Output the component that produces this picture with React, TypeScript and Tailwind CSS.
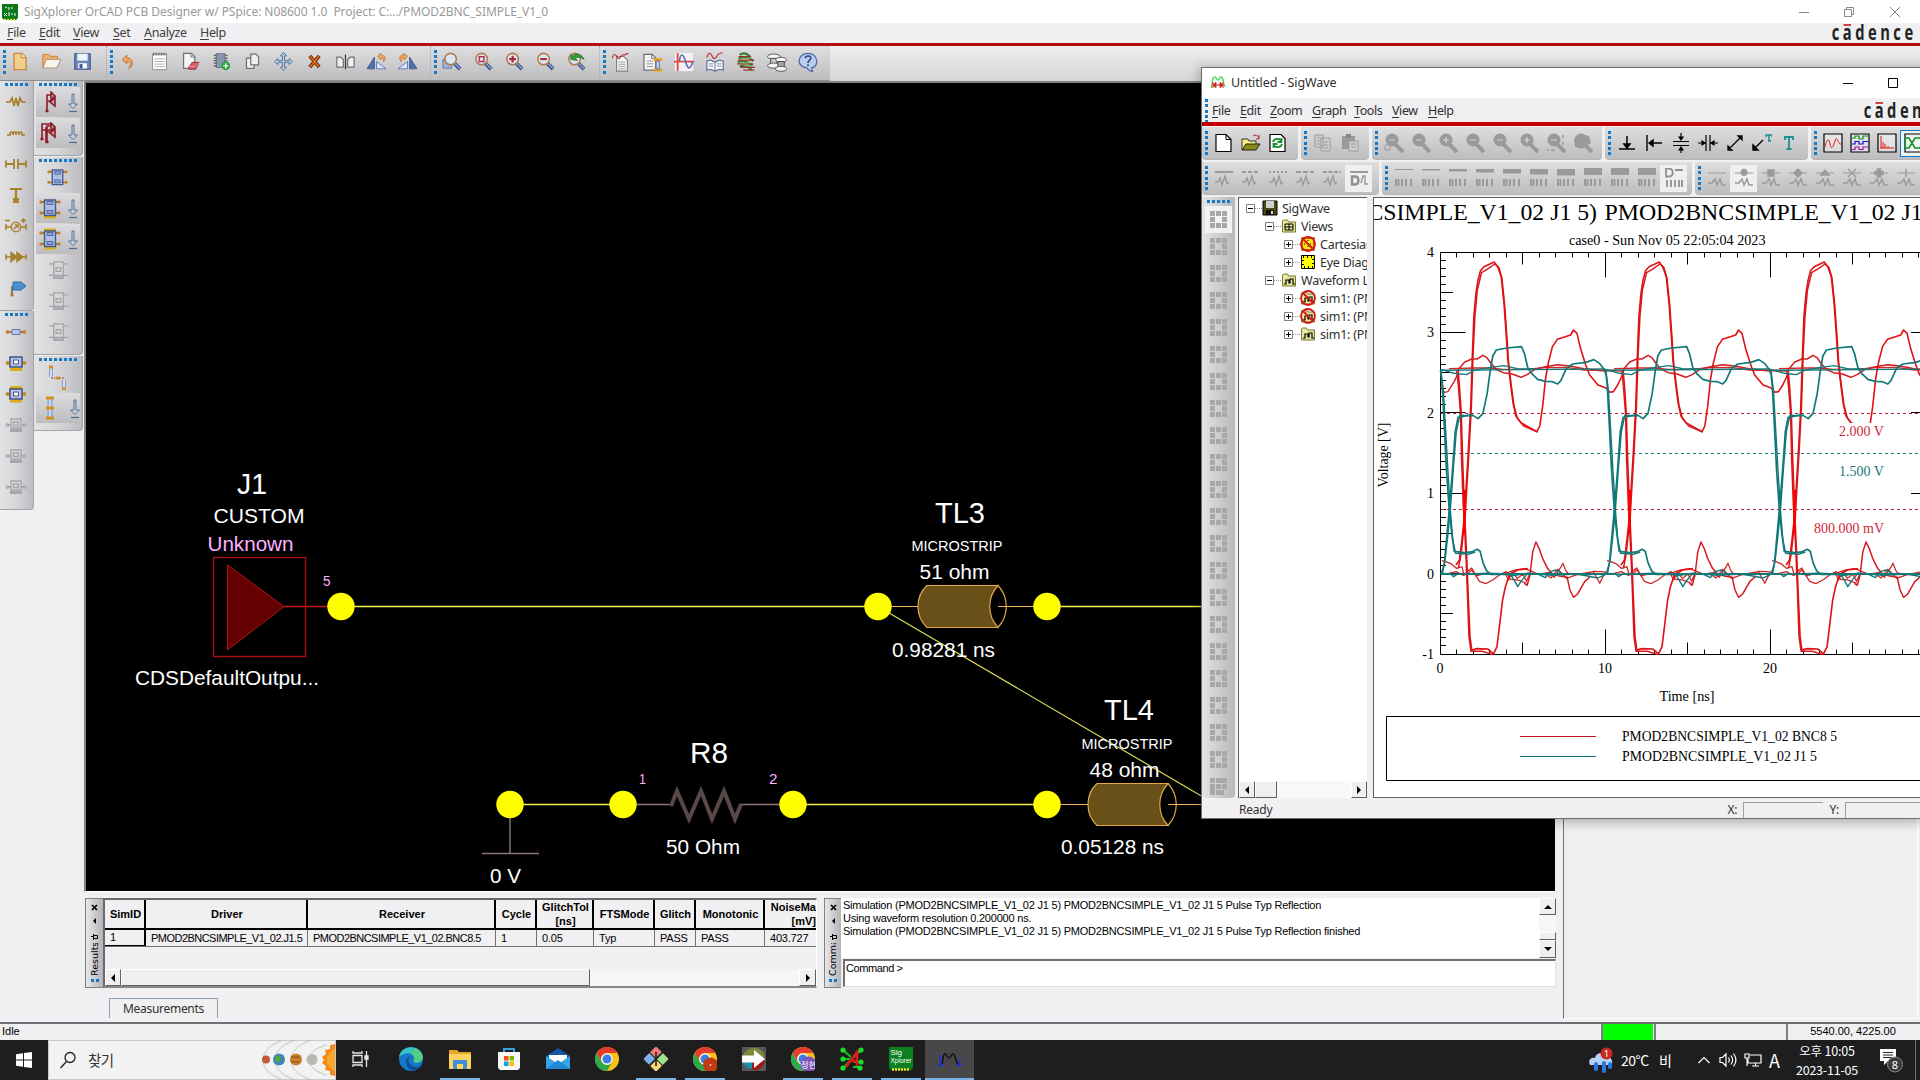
import React from "react";

type Kids = { children?: React.ReactNode };

/* ---------- small building blocks ---------- */

const Ico = ({ children, s = 22, vb = 22 }: Kids & { s?: number; vb?: number }) => (
  <svg width={s} height={s} viewBox={`0 0 ${vb} ${vb}`} fill="none" className="block shrink-0">
    {children}
  </svg>
);

const GripV = () => (
  <div className="flex h-6 w-[3px] shrink-0 flex-col justify-between">
    {[0, 1, 2, 3, 4].map((i) => (
      <div key={i} className="h-[3px] w-[3px] bg-[#1478c8]" />
    ))}
  </div>
);

const GripH = ({ n }: { n: number }) => (
  <div className="flex h-[3px] shrink-0 justify-center gap-[2px]">
    {Array.from({ length: n }, (_, i) => (
      <div key={i} className="h-[3px] w-[3px] bg-[#1478c8]" />
    ))}
  </div>
);

const Cell31 = ({ children }: Kids) => (
  <div className="flex h-8 w-[31px] shrink-0 items-center justify-center">{children}</div>
);

const MenuItem = ({ t, w }: { t: string; w: string }) => (
  <div className={`${w} shrink-0 whitespace-nowrap`}>
    <span className="underline decoration-1 underline-offset-2">{t[0]}</span>
    {t.slice(1)}
  </div>
);

const Cadence = () => (
  <svg width="84" height="18" viewBox="0 0 84 18" className="block shrink-0">
    <text x="1" y="16" transform="scale(0.7 1)" fontFamily="Open Sans, sans-serif" fontWeight="700" fontSize="21" fill="#242424" textLength="116" lengthAdjust="spacing">
      cadence
    </text>
    <rect x="12.500" y="0" width="7.500" height="2" fill="#d04048" />
  </svg>
);

/* ---------- main toolbar icons ---------- */

const Lens = ({ children }: Kids) => (
  <g>
    <path d="M13 13l6 6" stroke="#3c4f86" strokeWidth="4" />
    <path d="M13 12.500l6 6" stroke="#8fa5d0" strokeWidth="1.500" />
    <circle cx="9" cy="8.500" r="6" fill="#dbe6f5" stroke="#b07a4a" strokeWidth="1.600" />
    {children}
  </g>
);

const FILE_ICONS = [
  <g key="n"><path d="M3.500 1.500h9l5 5v14h-14z" fill="#f3cf8c" stroke="#c07a35" strokeWidth="1.300" /><path d="M12 1.500v5h5" fill="#fdf0d0" stroke="#c07a35" /></g>,
  <g key="o"><path d="M1 18V3h7l2 2h8v4" fill="#f0b070" stroke="#c07a35" /><path d="M1 18.500l4-10h17l-5 10z" fill="#f8f4ee" stroke="#a88664" /></g>,
  <g key="s"><path d="M2 2h18v18H2z" fill="#6f86ba" stroke="#3f5590" strokeWidth="1.300" /><path d="M5 2h12v8H5z" fill="#eef2fa" /><path d="M6 13h10v6H6z" fill="#fff" /><path d="M7.500 14h3.500v5H7.500z" fill="#3f5590" /></g>,
];

const Doc = ({ x = 0 }: { x?: number }) => (
  <g transform={`translate(${x} 0)`}><path d="M3 1.500h9l4 4V19H3z" fill="#f4f4f4" stroke="#707070" strokeWidth="1.400" /><path d="M11.500 1.500v4.500H16" stroke="#707070" /></g>
);

const EDIT_ICONS = [
  <g key="u"><path d="M9 3.500L3.500 9 9 13.500v-3c5 0 5 5 2 8.500 7-3 6-12-2-12z" fill="#f0a860" stroke="#b86a28" /></g>,
  <g key="l"><path d="M3 2.500h16v18H3z" fill="#fff" stroke="#808080" /><path d="M5 8h12M5 11h12M5 14h12M5 17h12" stroke="#a8a8a8" /><path d="M3.500 2.500h15.500" stroke="#666" strokeWidth="3" strokeDasharray="1.500 1.500" /></g>,
  <g key="e"><Doc /><path d="M8 19l5-7h8l-4 8H9z" fill="#d35a66" stroke="#8f2a38" /><path d="M9 16.500h8l4-4" stroke="#f0a0a8" /></g>,
  <g key="c"><path d="M2 4h4M2 7h4M2 10h4M2 13h4M2 16h4M14 4h4M14 7h4M14 10h4" stroke="#606060" strokeWidth="1.400" /><path d="M5 2h10v16H5z" fill="#8a96ac" stroke="#606878" /><circle cx="16" cy="16" r="5" fill="#1fa03a" /><path d="M16 13v6M13 16h6" stroke="#fff" strokeWidth="1.600" /></g>,
  <g key="p"><path d="M4 7h9v12H4z" fill="#f0f0f0" stroke="#707070" strokeWidth="1.400" /><path d="M9 2.500h6l3 3V15H9z" fill="#f0f0f0" stroke="#707070" strokeWidth="1.400" /></g>,
  <g key="m"><path d="M11 .5l3.500 4h-2.300V10h5.300V7.500l4 3.500-4 3.500V12h-5.300v5.500h2.300l-3.500 4-3.500-4h2.300V12H4.500v2.500L.5 11l4-3.500V10h5.300V4.500H7.500z" fill="#b8d0ea" stroke="#4a6a92" /></g>,
  <g key="x"><path d="M5.500 4.500l11 13M16.500 4.500l-11 13" stroke="#7a2c08" strokeWidth="4.400" /><path d="M6 5l10 12M16 5L6 17" stroke="#e07020" strokeWidth="1.800" /></g>,
  <g key="r"><path d="M1 6h4.500l3 3v8.500H1zM21 6h-4.500l-3 3v8.500H21z" fill="#f0f0f0" stroke="#707070" strokeWidth="1.400" /><path d="M11 3v17" stroke="#333" strokeWidth="1.400" /></g>,
  <g key="f1"><path d="M8.500 6v13.500H0z" fill="#5270aa" stroke="#3a5590" /><path d="M11 11v8.500h11z" fill="#d8e4f6" stroke="#5270aa" /><path d="M12 5l4-3.500v2c6 0 6 5 3 8 1-3 0-4.500-3-4.500v2z" fill="#f0a860" stroke="#b86a28" strokeWidth=".8" /></g>,
  <g key="f2"><path d="M13.500 6v13.500H22z" fill="#5270aa" stroke="#3a5590" /><path d="M11 11v8.500H0z" fill="#d8e4f6" stroke="#5270aa" /><path d="M11 5L7 1.500v2c-6 0-6 5-3 8-1-3 0-4.500 3-4.500v2z" fill="#f0a860" stroke="#b86a28" strokeWidth=".8" /></g>,
];

const ZOOM_ICONS = [
  <g key="z1"><path d="M1 9h9v9H1z" fill="#9db4dc" stroke="#5a74a8" /><Lens /></g>,
  <g key="z2"><Lens><path d="M6.500 6h5v5h-5z" stroke="#b02a50" strokeWidth="1.400" /></Lens></g>,
  <g key="z3"><Lens><path d="M9 5v7M5.500 8.500h7" stroke="#b02040" strokeWidth="2.200" /></Lens></g>,
  <g key="z4"><Lens><path d="M5.500 8.500h7" stroke="#b02040" strokeWidth="2.200" /></Lens></g>,
  <g key="z5"><Lens /><path d="M5 9V4l2 1c5-4 10-1 12 4-4-3-7-3-9-1l2 2z" fill="#2e9a38" stroke="#1d6c26" strokeWidth=".7" /></g>,
];

const Lines = ({ c = "#909090" }: { c?: string }) => <path d="M6 9h7M6 12h7M6 15h7" stroke={c} />;

const TOOL_ICONS = [
  <g key="t1"><path d="M5 5h8l4 4v12H5z" fill="#f6f6f6" stroke="#808080" strokeWidth="1.200" /><path d="M7 11h8M7 13.500h8M7 16h8M7 18.500h8" stroke="#999" /><path d="M0 7c2-6 4-5 6-1s4-3 6-3 2 1 6-2" stroke="#c03038" strokeWidth="1.300" /></g>,
  <g key="t2"><g transform="translate(-2 1)"><Doc /><Lines /></g><path d="M12 8.500h9M12 20h9" stroke="#e0a020" strokeWidth="3" /><path d="M14.500 10h3.500v8.500h-3.500z" fill="#c8d6f2" stroke="#6070a0" /></g>,
  <g key="t3"><path d="M1 1h20v20H1z" fill="#f8f0f4" /><path d="M4 1v20M0 10.500h22" stroke="#e04838" strokeWidth="2" /><path d="M6 10c1-9 4-9 6.500 0s5 11 8.500 0" stroke="#5070b8" strokeWidth="1.800" /></g>,
  <g key="t4"><path d="M2 10l4-1 5 2 5-2 4 1v10l-4-1-5 2-5-2-4 1z" fill="#f4f6fa" stroke="#607090" strokeWidth="1.300" /><path d="M11 11v10" stroke="#607090" /><path d="M4 13h5M4 15.500h5M13 13h5M13 15.500h5" stroke="#8090a8" /><path d="M2 6c2-6 4-6 6-1s5 0 6-2 3 0 5-3" stroke="#c03038" strokeWidth="1.300" /></g>,
  <g key="t5"><path d="M4 3c5-3 9-1 12 3M3 7c5-3 12-1 16 3M2 11c5-2 12 0 16 4M4 16c5-2 10 0 13 4" stroke="#2f7c30" strokeWidth="2.400" /><path d="M3 5h13M2 9h18M1 13h18M5 17h16M8 20h12" stroke="#a03028" strokeWidth="1.300" /><path d="M7 7h9M7 12h9M9 15h8" stroke="#6cc060" strokeWidth="1.300" /></g>,
  <g key="t6"><ellipse cx="7.500" cy="5" rx="7" ry="2.800" fill="#f4f4f4" stroke="#505050" /><path d="M4 7h7v7H4z" fill="#c8c8c8" stroke="#404040" /><ellipse cx="7.500" cy="15" rx="7" ry="2.800" fill="#f4f4f4" stroke="#505050" /><ellipse cx="15.500" cy="8.500" rx="6" ry="2.600" fill="#fff" stroke="#505050" /><path d="M12 10.500h7v7h-7z" fill="#a8a8a8" stroke="#404040" /><ellipse cx="15.500" cy="18.500" rx="6.300" ry="2.700" fill="#f4f4f4" stroke="#505050" /></g>,
  <g key="t7"><path d="M11 1.500c12 0 12 15.500 4 16l1 4c-5-1-6-4-6-4C-2.500 16.500-1 1.500 11 1.500z" fill="#b8cdf0" stroke="#5068a8" strokeWidth="1.400" /><path d="M8 7c0-4 7-3 6 0 0 2-3 2-3 5M11 13.500v2" stroke="#304888" strokeWidth="1.800" /></g>,
];

/* ---------- left palette icons ---------- */

const G = "#a8812c";
const PALETTE_1 = [
  <path key="a" d="M1 11h4l2-4 2 8 2-8 2 8 2-8 2 4h4" stroke={G} strokeWidth="1.700" />,
  <path key="b" d="M2 13h3c0-4 3-4 3 0 0-4 3-4 3 0 0-4 3-4 3 0 0-4 3-4 3 0h3" stroke={G} strokeWidth="1.700" />,
  <path key="c" d="M1 7.500v7M21 7.500v7M1 11h8M13 11h8M9 6v10M13 6v10" stroke={G} strokeWidth="1.800" />,
  <path key="d" d="M5 5h12M11 5v12M8 18h2l1-2 1 2h2M8 16l3-2 3 2" stroke={G} strokeWidth="2.200" />,
  <g key="e" stroke={G} strokeWidth="1.500"><circle cx="11" cy="12" r="4.700" /><path d="M0 12h6M16 12h6M1 9v6M21 9v6M0 5.500h5M16 5.500h5M18.500 3v5M9 14l4-4M10 10h3v3" /></g>,
  <path key="f" d="M0 11h22M1 8v6M21 8v6M6 6.500v9l6-4.500zM12 6.500v9l6-4.500z" stroke={G} fill={G} strokeWidth="1.400" />,
  <g key="g"><path d="M7 17V9" stroke="#605850" strokeWidth="1.500" /><path d="M8 5h8l5 4-5 4H8z" fill="#4a90d0" stroke="#2d6aa4" /><circle cx="7" cy="18" r="1.700" fill="#b07830" /></g>,
];

const Pads = ({ y = 11 }: { y?: number }) => (
  <g fill="#c88420"><circle cx="2.500" cy={y} r="1.900" /><circle cx="19.500" cy={y} r="1.900" /></g>
);
const PALETTE_2 = [
  <g key="a"><path d="M2 11h18" stroke="#604838" strokeWidth="1.300" /><path d="M7 8.500h8v5H7z" fill="#b8c6ee" stroke="#6a7ab0" /><Pads /></g>,
  <g key="b"><path d="M5 17.500h12" stroke="#d8a818" strokeWidth="3" /><path d="M2 11h18" stroke="#604838" /><path d="M5 5h12v10H5z" fill="#b8c6ee" stroke="#40507c" strokeWidth="1.500" /><path d="M8.500 8h5v4h-5z" fill="#fff" stroke="#40507c" /><Pads /></g>,
  <g key="c"><path d="M5 4.500h12M5 18h12" stroke="#d8b018" strokeWidth="3" /><path d="M2 11h18" stroke="#604838" /><path d="M5 6h12v10H5z" fill="#b8c6ee" stroke="#40507c" strokeWidth="1.500" /><path d="M8.500 9h5v4h-5z" fill="#fff" stroke="#40507c" /><Pads /></g>,
];
const GreyPart = () => (
  <g stroke="#a6a6aa" strokeWidth="1.300"><path d="M6 5h10v9H6z" fill="#d6d6d8" /><path d="M8.500 8h5v3.500h-5z" /><path d="M5 16.500h12" strokeWidth="3" /><path d="M3 11h3M16 11h3" /><circle cx="2.500" cy="11" r="1.200" /><circle cx="19.500" cy="11" r="1.200" /></g>
);

const Buf = ({ two = false }: { two?: boolean }) => (
  <g stroke="#8c1c28" strokeWidth="1.600">
    {two && <path d="M3 17V2h10M3 8h8M7 20V5" />}
    <path d="M8 20V4h6M8 10h5" /><path d="M12 1l4 4-4 4zM16 7v8l-5-4z" fill="#d09aa0" />
    <path d="M6.500 20h3" strokeWidth="2.500" />
    {two && <path d="M1.500 17h3" strokeWidth="2.500" />}
  </g>
);
const DownArrow = () => (
  <svg width="12" height="22" viewBox="0 0 12 22" fill="none" className="block shrink-0">
    <path d="M5 3h2v10h3.500L6 17.500 1.500 13H5z" fill="#c4d4e4" stroke="#4c6a8a" strokeWidth=".9" /><path d="M2 20.500h8" stroke="#4c6a8a" strokeWidth="1.200" />
  </svg>
);
const Coupled = ({ top = false, bot = false }: { top?: boolean; bot?: boolean }) => (
  <g>
    {top && <path d="M5 2h12" stroke="#d8b018" strokeWidth="3" />}
    {bot && <path d="M5 20h12" stroke="#d8b018" strokeWidth="3" />}
    <path d="M1 5h20M1 16h20" stroke="#705040" strokeWidth="1.300" />
    <path d="M5.500 3h11v15.500h-11z" fill="#b0bfe6" stroke="#43598c" strokeWidth="1.400" />
    <path d="M8 4.500h6v3H8zM8 13.500h6v3H8z" fill="#8fa0d4" stroke="#43598c" strokeWidth=".8" />
    <g fill="#c88420"><circle cx="2" cy="5" r="1.700" /><circle cx="20" cy="5" r="1.700" /><circle cx="2" cy="16" r="1.700" /><circle cx="20" cy="16" r="1.700" /></g>
  </g>
);
const GreyCoupled = () => (
  <g stroke="#a4a4a8" strokeWidth="1.300"><path d="M6 2h10v17H6z" fill="#d6d6d8" /><path d="M1 4h5M16 4h5M1 16h5M16 16h5M8.500 8h5v4h-5z" /><path d="M6 16h10v3H6z" fill="#b4b4b8" /></g>
);

const Hi = ({ children }: Kids) => (
  <div className="mx-[2px] mb-px flex h-[30px] items-center bg-gradient-to-b from-[#dcdcde] to-[#bdbdc0] pl-[3px]">
    {children}
    <div className="ml-[6px]"><DownArrow /></div>
  </div>
);

/* ---------- schematic ---------- */

const Line = ({ x, y, s, t, c = "#fff", w }: { x: number; y: number; s: number; t: string; c?: string; w: number }) => (
  <text x={x} y={y} fontSize={s} fill={c} textLength={w} lengthAdjust="spacingAndGlyphs">{t}</text>
);

const TLine = ({ x, y }: { x: number; y: number }) => (
  <g transform={`translate(${x} ${y})`} stroke="#e0a848" strokeWidth="1.200">
    <path d="M9 -21h71v42H9C-3 10 -3 -10 9 -21z" fill="#685018" />
    <path d="M80 -21c-11 12-11 30 0 42c11-12 11-30 0-42z" fill="#000" />
    <path d="M-27 0H0M80 0h36" stroke="#f0b060" />
  </g>
);

const Schematic = () => (
  <svg width="1469" height="808" viewBox="86 83 1469 808" className="block bg-black" fontFamily="Liberation Sans, Arial, sans-serif">
    <g stroke="#f4f450" strokeWidth="1.300" fill="none">
      <path d="M341 606.500H877M1047 606.500h160M510 804.500h113M793 804.500h254" />
      <path d="M878 606.500L1215 804" stroke="#d8d858" strokeWidth="1.200" />
    </g>
    <path d="M284 606.500h50" stroke="#c01818" strokeWidth="1.400" />
    <rect x="213.500" y="557.500" width="92" height="99" fill="none" stroke="#a81010" strokeWidth="1.400" />
    <path d="M227.500 565L284 606.500L227.500 650z" fill="#640000" stroke="#b01818" />
    <TLine x={918} y={606.500} />
    <TLine x={1088} y={804.500} />
    <path d="M623 804.500h48M740 804.500h52M510 818v35M482 853.500h57" stroke="#8c7474" strokeWidth="1.400" fill="none" />
    <path d="M671 806l6-15 12 28 12-28 11 28 12-28 11 28 6-15" fill="none" stroke="#5a4848" strokeWidth="4" />
    <g fill="#ffff00">
      <circle cx="341" cy="606.500" r="13.700" /><circle cx="878" cy="606.500" r="13.700" /><circle cx="1047" cy="606.500" r="13.700" />
      <circle cx="510" cy="804.500" r="13.700" /><circle cx="623" cy="804.500" r="13.700" /><circle cx="793" cy="804.500" r="13.700" />
      <circle cx="1047" cy="804.500" r="13.700" /><circle cx="1217" cy="804.500" r="13.700" />
    </g>
    <Line x={237} y={493.500} s={29} t="J1" w={30} />
    <Line x={213.500} y={523} s={20} t="CUSTOM" w={91} />
    <Line x={207.500} y={551} s={20} t="Unknown" w={86} c="#ffb0ff" />
    <Line x={323} y={585.500} s={14} t="5" w={7.500} c="#ffb0ff" />
    <Line x={135} y={685} s={20} t="CDSDefaultOutpu..." w={184} />
    <Line x={935} y={523} s={29} t="TL3" w={50} />
    <Line x={911.500} y={551} s={14} t="MICROSTRIP" w={91} />
    <Line x={919.500} y={579} s={20} t="51 ohm" w={70} />
    <Line x={892} y={657} s={20} t="0.98281 ns" w={103} />
    <Line x={1104} y={720} s={29} t="TL4" w={50} />
    <Line x={1081.500} y={749} s={14} t="MICROSTRIP" w={91} />
    <Line x={1089.500} y={777} s={20} t="48 ohm" w={70} />
    <Line x={1061} y={854} s={20} t="0.05128 ns" w={103} />
    <Line x={690} y={763} s={29} t="R8" w={38} />
    <Line x={639} y={784} s={14} t="1" w={7} c="#ffb0ff" />
    <Line x={769} y={784} s={14} t="2" w={8.500} c="#ffb0ff" />
    <Line x={666} y={854} s={20} t="50 Ohm" w={74} />
    <Line x={490} y={882.500} s={20} t="0 V" w={31} />
  </svg>
);

/* ---------- waveform plot ---------- */

const RED_MAIN = [
  "M251 390L255 440L260 520L264 660L269 800L272 870L276 960L280 1070L285 1190L290 1230L305 1226L335 1227L352 1242L362 1220L370 1150L378 1080L386 1040L395 1012L405 1000L420 990L450 986",
  "M245 975L255 960L262 900L268 840L272 780L280 640L287 500L292 340L296 230L302 160L308 120L315 92L325 80L354 66L364 80L374 110L382 190L388 280L393 360L400 425L408 490L416 528L430 548L476 575L484 558L492 500L500 420L508 370L520 320L534 298L572 285L580 270L590 280L600 325L615 375L626 405L650 435L673 444L684 457L694 455L706 435L721 402",
];
const RED_SECOND = [
  "M247 390L252 440L258 520L261 660L266 800L270 870L274 960L278 1070L282 1190L288 1234L320 1234L350 1244",
  "M252 985L260 940L265 890L271 840L274 780L282 640L289 500L294 340L299 230L306 150L318 98L334 88L356 72L367 82L376 114L384 196L390 286L395 366L402 431L410 494L420 535L438 558L478 576",
  "M440 1030L448 1036L456 1005L464 935L473 906L482 925L492 955L506 985L520 1002L540 1008L562 1012L570 1050L580 1072L592 1062L612 1025L630 1008",
  "M250 392L260 378L270 366L290 357L305 357L322 346L334 354L346 372L360 388L380 398L405 402L430 412L448 404L470 388L500 380L535 374L570 378L610 386L660 392L721 392",
];
const RED_THIN = [
  "M225 386L300 384L340 384L380 388L440 388L500 383L560 382L610 390L720 392",
  "M205 962L216 965L232 972L246 985L262 980L268 1005L280 992L290 984L300 1003L312 1024L330 1031L350 1020L372 1003L388 995L400 1018L420 1020L446 1030",
  "M202 1003L225 1000L246 995L265 1006L280 1000L290 990L302 1008L330 1000L380 1003L400 995L415 990L440 986L456 992L480 1003L510 997L525 1012L545 980L550 970L558 992L566 1002",
  "M385 1000L395 1020L405 995L420 1015L436 1003L446 1024L456 1000M500 1003L516 1014L535 988L560 1015L590 1004L620 1000L636 994L655 1030L664 1010L673 995M560 1000L600 1002L640 994L671 996",
];
const TEAL_MAIN = [
  "M201 390L206 440L212 560L218 690L226 810L233 880L240 934L270 938L290 936L305 928L314 934L322 968L332 992L344 1003L400 1003",
  "M204 1000L212 970L218 900L226 810L236 680L243 575L251 532L290 524L308 536L322 520L334 460L343 390L350 348L360 330L390 324L432 320L440 340L450 384L462 402L478 418L500 424L520 425L535 432L544 422L560 385L578 372L615 367L638 359L655 371L667 388L671 400",
];
const TEAL_SECOND = [
  "M202 392L209 450L215 560L222 690L229 810L236 900L244 940L280 943L300 936",
  "M207 998L214 960L221 895L229 810L238 680L246 575L256 526L292 528",
  "M201 1000L230 1002L238 1010L248 1003L340 1000L400 1003L412 1022L421 1040L432 1022L450 1000L480 1003L500 1013L514 995L530 990L550 1002L600 1004L671 1002",
];
const TEAL_THIN = [
  "M201 388L240 400L275 404L300 390L340 383L382 377L420 386L480 388",
  "M201 391L671 387M201 1003H671M340 1001H671M400 1008L450 1000L520 1006L590 1002L650 1014L671 1004",
];

const Waves = () => (
  <g transform="translate(1370 240) scale(0.3508 0.3333)" fill="none" strokeLinejoin="round">
    {[0, 1, 2].map((k) => (
      <g key={k} transform={`translate(${k * 470.5} 0)`}>
        {k === 0 && <path d="M201 440L212 457L222 455L240 425L250 402" stroke="#d41c20" strokeWidth="1.400" vectorEffect="non-scaling-stroke" />}
        {RED_THIN.map((d) => <path key={d} d={d} stroke="#d02828" strokeWidth="1.300" vectorEffect="non-scaling-stroke" />)}
        {RED_SECOND.map((d) => <path key={d} d={d} stroke="#d41c20" strokeWidth="1.500" vectorEffect="non-scaling-stroke" />)}
        {RED_MAIN.map((d) => <path key={d} d={d} stroke="#e01014" strokeWidth="1.600" vectorEffect="non-scaling-stroke" />)}
        <path d="M269 880L270 750" stroke="#ff0000" strokeWidth="2.800" vectorEffect="non-scaling-stroke" />
        {TEAL_THIN.map((d) => <path key={d} d={d} stroke="#147878" strokeWidth="1.400" vectorEffect="non-scaling-stroke" />)}
        {TEAL_SECOND.map((d) => <path key={d} d={d} stroke="#147878" strokeWidth="1.400" vectorEffect="non-scaling-stroke" />)}
        {TEAL_MAIN.map((d) => <path key={d} d={d} stroke="#107878" strokeWidth="1.700" vectorEffect="non-scaling-stroke" />)}
      </g>
    ))}
  </g>
);

const tickPath = () => {
  let d = "";
  for (let i = 1; i < 30; i++) {
    const x = 1440.5 + i * 16.5;
    const l = i % 10 === 0 ? 25 : i % 5 === 0 ? 12 : 5;
    d += `M${Math.round(x) - 0.5} 252.5v${l}M${Math.round(x) - 0.5} 654.5v${-l}`;
  }
  for (let i = 1; i < 50; i++) {
    const y = Math.round(252.5 + i * 8.04) - 0.5;
    const l = i % 10 === 0 ? 25 : i % 5 === 0 ? 12.5 : 5.5;
    d += `M1440.5 ${y}h${l}`;
    if (i % 10 === 0) d += `M1911 ${y}h20`;
  }
  return d;
};

const Tm = ({ x, y, t, a = "middle", s = 14, c = "#000", w }: { x: number; y: number; t: string; a?: "start" | "middle" | "end"; s?: number; c?: string; w?: number }) => (
  <text x={x} y={y} fontSize={s} fill={c} textAnchor={a} {...(w ? { textLength: w, lengthAdjust: "spacingAndGlyphs" } : {})}>{t}</text>
);

const Plot = () => (
  <svg width="546" height="599" viewBox="1374 198 546 599" className="block bg-white" fontFamily="Liberation Serif, Times New Roman, serif">
    <Tm x={1597} y={220} s={24} a="end" t="(PMOD2BNCSIMPLE_V1_02 J1 5)" w={351} />
    <Tm x={1604.500} y={220} s={24} a="start" t="PMOD2BNCSIMPLE_V1_02 J1 5" w={336} />
    <Tm x={1569} y={245} s={14} a="start" t="case0 - Sun Nov 05 22:05:04 2023" w={196.500} />
    <path d={"M1931 252.5H1440.500V654.500H1931" + tickPath()} stroke="#000" fill="none" />
    <path d="M1441 413.500h490M1441 509.500h490" stroke="#b02838" strokeDasharray="3 3" fill="none" />
    <path d="M1441 453.500h490" stroke="#187878" strokeDasharray="3 3" fill="none" />
    <Waves />
    <path d="M1838 423h48v17h-48zM1838 463h48v17h-48zM1812 520h74v17h-74z" fill="#fff" />
    <Tm x={1884} y={436} a="end" t="2.000 V" c="#d02838" w={45} />
    <Tm x={1884} y={476} a="end" t="1.500 V" c="#187878" w={45} />
    <Tm x={1884} y={533} a="end" t="800.000 mV" c="#d02838" w={70} />
    {[4, 3, 2, 1, 0, -1].map((v, i) => (
      <Tm key={v} x={1434} y={257 + i * 80.4} a="end" t={String(v)} />
    ))}
    <Tm x={1440} y={673} t="0" /><Tm x={1605} y={673} t="10" /><Tm x={1770} y={673} t="20" />
    <Tm x={1687} y={701} t="Time [ns]" w={55} />
    <text transform="translate(1388 455) rotate(-90)" fontSize="14" textAnchor="middle" textLength="65">Voltage [V]</text>
    <path d="M1930 716.500H1386.500V780.500H1930" stroke="#000" fill="none" />
    <path d="M1520 736.500h76" stroke="#c01820" /><path d="M1520 756.500h76" stroke="#107070" />
    <Tm x={1622} y={741} a="start" t="PMOD2BNCSIMPLE_V1_02 BNC8 5" w={215} />
    <Tm x={1622} y={761} a="start" t="PMOD2BNCSIMPLE_V1_02 J1 5" w={195} />
  </svg>
);

/* ---------- SigWave window ---------- */

const Group = ({ w, children }: Kids & { w: string }) => (
  <div className={`${w} mr-[3px] flex h-[33px] shrink-0 items-center gap-[2px] overflow-hidden rounded-b border-b border-[#b4b4b6] bg-gradient-to-b from-[#dededf] to-[#bdbdc0] pl-[3px]`}>
    <GripV />
    <div className="flex shrink-0">{children}</div>
  </div>
);
const C27 = ({ children, on = false }: Kids & { on?: boolean }) => (
  <div className={`${on ? "bg-[#efefef]" : ""} flex h-[27px] w-[27px] shrink-0 items-center justify-center`}>
    <Ico s={20} vb={20}>{children}</Ico>
  </div>
);

const D = "#9a9a9c";
const GreyLens = ({ k }: { k: number }) => (
  <g>
    <path d="M11 11l8 8" stroke={D} strokeWidth="4" />
    <circle cx="8" cy="7" r="6.500" fill={D} />
    {k < 7 && <path d={k % 3 === 2 ? "M5 7h6M8 4v6" : "M5 7h6"} stroke="#d6d6d8" strokeWidth="1.200" />}
    {k === 0 && <path d="M1 12h5v5H1z" stroke={D} />}
    {k === 6 && <path d="M1 17h2M5 17h4M17 2v3M17 9v3" stroke={D} strokeWidth="1.500" />}
    {k === 7 && <path d="M1 7l6-6 9 2 2 7-9 6-7-2z" fill={D} />}
  </g>
);

const MEASURE = [
  <path key="a" d="M2 16h16M10 3v12M7 11l3 4 3-4z" stroke="#000" strokeWidth="1.500" fill="#000" />,
  <path key="b" d="M3 2v16M18 10H5M9 7l-4 3 4 3z" stroke="#000" strokeWidth="1.400" fill="#000" />,
  <path key="c" d="M2 8.500h16M2 12.500h16M10 0v7M10 14v6M8 4l2 3 2-3zM8 17l2-3 2 3z" stroke="#000" strokeWidth="1.200" fill="#000" />,
  <path key="d" d="M8 2v16M12 2v16M0 10h7M13 10h7M4 8l3 2-3 2zM16 8l-3 2 3 2z" stroke="#000" strokeWidth="1.200" fill="#000" />,
  <path key="e" d="M3 17L17 3M3 13v4h4zM17 7V3h-4z" stroke="#000" strokeWidth="1.300" fill="#000" />,
  <g key="f"><path d="M1 17L11 7M1 12v5h5z" stroke="#000" strokeWidth="1.400" fill="#000" /><path d="M14 4V2h6v2M17 2v6M16 8h3" stroke="#189090" strokeWidth="1.400" /></g>,
  <g key="g"><path d="M6 7V4h8v3M10 4v12M7.500 16h5" stroke="#189090" strokeWidth="1.800" /></g>,
];

const MARKS = [
  "",
  "M10 1.500a3 3 0 1 0 .1 0z",
  "M7 2h6v6H7z",
  "M10 1l4 4-4 4-4-4z",
  "M6 7l4-5 4 5z",
  "M6 1l8 8M14 1L6 9",
  "M8.500 1h3v8h-3zM6 3.500h8v3H6z",
  "M10 1v8",
];

const Exp = ({ plus }: { plus: boolean }) => (
  <svg width="9" height="9" viewBox="0 0 9 9" className="block shrink-0 bg-white">
    <path d="M.5 .5h8v8h-8z" fill="none" stroke="#808080" /><path d={plus ? "M2 4.5h5M4.500 2v5" : "M2 4.500h5"} stroke="#000" />
  </svg>
);
const Folder = ({ children }: Kids) => (
  <g><path d="M1.500 14V3l1-1h4l1 2h7v10z" fill="#e8e8a0" stroke="#77772c" />{children}</g>
);
const No = () => <g><circle cx="8" cy="8" r="7" stroke="#d81818" strokeWidth="1.800" /><path d="M3 3l10 10" stroke="#d81818" strokeWidth="1.800" /></g>;
const Wv = () => <path d="M3 12h2V8h3v3h1V7h3v5h2" stroke="#000" strokeWidth="1.200" />;

const TREE: [string, boolean, string, React.ReactNode][] = [
  ["pl-[7px]", false, "SigWave", <g key="0"><path d="M1 1h14v14H1z" fill="#4a4a10" stroke="#000" /><path d="M4 1h8v7H4z" fill="#d0d0d0" /><path d="M4 10h8v5H4z" fill="#101010" /><path d="M9 11h2v3H9z" fill="#ddd" /></g>],
  ["pl-[26px]", false, "Views", <Folder key="1"><path d="M4 6h8v6H4zM8 6v6M4 9h8" stroke="#000" /></Folder>],
  ["pl-[45px]", true, "Cartesian", <g key="2"><path d="M2 2h12v12H2z" fill="#f8e810" stroke="#a04000" strokeWidth="1.500" /><path d="M8 4v8M4 8h8" stroke="#000" strokeDasharray="1 2" /><No /></g>],
  ["pl-[45px]", true, "Eye Diagram", <g key="3"><path d="M1 1h14v14H1z" fill="#ffff00" /><path d="M1.500 1.500h13v13h-13z" stroke="#000" /><path d="M3 3h10v10H3z" stroke="#000" strokeWidth="2" strokeDasharray="1 3" /></g>],
  ["pl-[26px]", false, "Waveform Library", <Folder key="4"><Wv /></Folder>],
  ["pl-[45px]", true, "sim1: (PMOD2BNC", <Folder key="5"><Wv /><No /></Folder>],
  ["pl-[45px]", true, "sim1: (PMOD2BNC", <Folder key="6"><Wv /><No /></Folder>],
  ["pl-[45px]", true, "sim1: (PMOD2BNC", <Folder key="7"><Wv /></Folder>],
];

const Tri = ({ d }: { d: "l" | "r" | "u" | "d" }) => (
  <svg width="8" height="8" viewBox="0 0 8 8" className="block">
    <path d={d === "l" ? "M6 0v8L2 4z" : d === "r" ? "M2 0v8l4-4z" : d === "u" ? "M0 6h8L4 2z" : "M0 2h8L4 6z"} fill="#000" />
  </svg>
);
const Btn = ({ children, cls }: Kids & { cls: string }) => (
  <div className={`${cls} flex shrink-0 items-center justify-center border border-t-white border-r-[#606060] border-b-[#606060] border-l-white bg-[#f0eef0]`}>{children}</div>
);

const SigWave = () => (
  <div className="absolute left-[1201px] top-[67px] flex h-[752px] w-[719px] flex-col overflow-hidden border-t border-b border-l border-[#6e6e70] bg-[#f0eff1] font-['Noto_Sans','Noto_Sans_CJK_KR',sans-serif] text-[12.5px] text-[#303030] shadow-[0_2px_10px_2px_rgba(0,0,0,0.25)]">
    <div className="flex h-[30px] shrink-0 items-center bg-white pl-[8px]">
      <Ico s={16} vb={16}><path d="M1 13c2-3 0-11 4-11 2 0 1 3 3 3s1-3 3-3c3 0 2 7 4 10" stroke="#40d850" strokeWidth="1.300" /><path d="M3 10h10M3 10l3-2.500v5zM13 10l-3-2.500v5zM3 7v6M13 7v6" stroke="#d02020" fill="#d02020" /></Ico>
      <span className="ml-[5px] tracking-[-0.1px]">Untitled - SigWave</span>
      <svg width="80" height="12" viewBox="0 0 80 12" fill="none" stroke="#000" className="ml-auto mr-[12px] block"><path d="M15 6.500h10" /><path d="M60.500 1.500h9v9h-9z" /></svg>
    </div>
    <div className="flex h-[24px] shrink-0 items-center pl-[3px] pt-[2px]">
      <GripV />
      <div className="ml-[4px] flex tracking-[-0.4px]">
        <MenuItem t="File" w="w-[28px]" /><MenuItem t="Edit" w="w-[30px]" /><MenuItem t="Zoom" w="w-[42px]" /><MenuItem t="Graph" w="w-[42px]" />
        <MenuItem t="Tools" w="w-[38px]" /><MenuItem t="View" w="w-[36px]" /><MenuItem t="Help" w="w-[30px]" />
      </div>
      <div className="ml-auto mr-[-27px]"><Cadence /></div>
    </div>
    <div className="h-[4px] shrink-0 bg-[#c40006]" />
    <div className="flex h-[35px] shrink-0 pt-px">
      <Group w="w-[96px]">
        <C27><path d="M2 1.500h10l5 5v12H2z" fill="#fff" stroke="#000" strokeWidth="1.200" /><path d="M12 1.500v5h5" stroke="#000" /></C27>
        <C27><path d="M1 17V6h6l1 2h7v3" fill="#f8f080" stroke="#333" /><path d="M1 17l4-6h14l-4 6z" fill="#8a8a18" stroke="#222" /><path d="M12 3c3-2 5 0 6 2M18 2v4h-3" stroke="#c02020" /></C27>
        <C27><path d="M2 1.500h11l4 4v13H2z" fill="#fff" stroke="#000" strokeWidth="1.200" /><path d="M5 9c1-4 7-4 8-1M13.500 5v4h-4M14 11c-1 4-7 4-8 1M5.500 15v-4h4" stroke="#189030" strokeWidth="1.800" /></C27>
      </Group>
      <Group w="w-[68px]">
        <C27><path d="M2 2h8v12H2zM8 5h9v13H8z" fill="#cfcfd0" stroke={D} /><path d="M4 5h4M4 8h4M4 11h4M10 9h5M10 12h5M10 15h5" stroke={D} /></C27>
        <C27><path d="M2 3h13v13H2z" fill={D} /><path d="M6 1h5v4H6z" fill="#888" /><path d="M9 8h9v10H9z" fill="#cfcfd0" stroke={D} /><path d="M11 11h5M11 14h5" stroke={D} /></C27>
      </Group>
      <Group w="w-[230px]">{[0, 1, 2, 3, 4, 5, 6, 7].map((k) => <C27 key={k}><GreyLens k={k} /></C27>)}</Group>
      <Group w="w-[203px]">{MEASURE.map((m, i) => <C27 key={i}>{m}</C27>)}</Group>
      <Group w="w-[140px]">
        <C27><path d="M1 1h18v18H1z" fill="#fff" fillOpacity=".4" stroke="#000" strokeWidth="1.200" /><path d="M2 14c2-9 4-9 5-3s3 4 5-3 3 4 6 3" stroke="#e01818" /></C27>
        <C27><path d="M1 1h18v18H1z" fill="#fff" fillOpacity=".4" stroke="#000" strokeWidth="1.200" /><path d="M2 5h3V3h4v3h4V3h5" stroke="#109020" strokeWidth="1.200" /><path d="M2 11h3V8.500h4V11h4V8.500h5" stroke="#1010d0" strokeWidth="1.200" /><path d="M2 16.500h3V14h4v2.500h4V14h5" stroke="#a010b0" strokeWidth="1.200" /></C27>
        <C27><path d="M1 1h18v18H1z" fill="#fff" fillOpacity=".4" stroke="#000" strokeWidth="1.200" /><path d="M3 15h14M4 3v12M6 9v6M8 11v4M11 13v2" stroke="#e01818" /></C27>
        <div className="flex h-[27px] w-[27px] items-center justify-center border border-[#1478c8] bg-[#eef2f4]"><Ico s={20} vb={20}><path d="M1 1h18v18H1z" stroke="#000" strokeWidth="1.200" /><path d="M1 5h4l6 10h5l3-5M1 15h4L11 5h5l3 5M1 6v8" stroke="#109020" strokeWidth="1.500" /></Ico></div>
      </Group>
    </div>
    <div className="flex h-[36px] shrink-0 pt-px">
      <Group w="w-[177px]">
        {["", "4 2", "2 2", "5 2", "4 1.5"].map((k) => (
          <C27 key={k}><path d="M1 4h18" stroke={D} strokeWidth="2" strokeDasharray={k} /><path d="M1 14h3l2-4 2 7 3-9 2 8 2-2" stroke={D} strokeWidth="1.400" /></C27>
        ))}
        <C27 on><path d="M1 4h18" stroke={D} strokeWidth="2" /><path d="M3 8.500h3c4.500 0 4.500 8 0 8H3z" stroke="#909092" strokeWidth="2.400" /><path d="M12 15l2-7h2v8h3" stroke={D} strokeWidth="1.400" /></C27>
      </Group>
      <Group w="w-[310px]">
        {[1, 1.5, 2.5, 3.5, 4.5, 5.5, 6.5, 7, 7, 7].map((h, i) => (
          <C27 key={i}><rect x="1" y={i > 6 ? 0 : 1} width="18" height={h} fill={D} /><path d="M2 11v7M4.500 11v7M8 11v7M12 11v7M17 11v7" stroke={D} strokeWidth="2" /></C27>
        ))}
        <C27 on><path d="M2 .5h3c5 0 5 8 0 8H2zM11 2h8" stroke="#909092" strokeWidth="1.800" /><path d="M3 12v7M7 12v7M11 12v7M15 12v7M18 12v7" stroke={D} strokeWidth="2" /></C27>
      </Group>
      <Group w="w-[240px]">
        {MARKS.map((m, i) => (
          <C27 key={i} on={i === 1}><path d="M1 5h18" stroke={D} strokeWidth="1.200" /><path d={m || "M0 0"} fill={D} stroke={D} strokeWidth="1.400" /><path d="M1 15h4l3-4 2 6 3-6 2 6 4 0" stroke={D} strokeWidth="1.500" /></C27>
        ))}
      </Group>
    </div>
    <div className="flex h-[601px] shrink-0">
      <div className="mr-[3px] flex w-[33px] shrink-0 flex-col items-center rounded-b bg-gradient-to-r from-[#e4e4e6] to-[#b8b8bc] pt-[3px]">
        <GripH n={5} />
        <div className="mt-[3px] flex flex-col">
          {Array.from({ length: 22 }, (_, i) => (
            <div key={i} className={`${i === 0 ? "bg-[#f2f2f2]" : ""} flex h-[27px] w-[27px] items-center justify-center`}>
              <svg width="17" height="17" viewBox="0 0 17 17" fill="#a8a8aa">
                <path d={i === 21 ? "M0 0h5v5H0zM6 0h11v5H6zM0 6h5v11H0zM6 6h5v5H6zM12 6h5v5h-5zM6 12h8v5H6z" : "M0 0h5v5H0zM6 0h5v5H6zM12 0h5v5h-5zM0 6h5v5H0zM12 6h5v5h-5zM0 12h5v5H0zM6 12h5v5H6zM12 12h5v5h-5z"} />
              </svg>
            </div>
          ))}
        </div>
      </div>
      <div className="mr-[6px] flex w-[129px] shrink-0 flex-col border-t border-l border-t-[#5e5e60] border-l-[#5e5e60] bg-white">
        <div className="flex grow flex-col overflow-hidden pt-px">
          {TREE.map(([pad, plus, label, icon], i) => (
            <div key={i} className={`${pad} flex h-[18px] shrink-0 items-center whitespace-nowrap leading-[17px] tracking-[-0.25px]`}>
              <Exp plus={plus} />
              <div className="w-[7px] shrink-0 border-t border-dotted border-[#909090]" />
              <Ico s={16} vb={16}>{icon}</Ico>
              <span className="ml-[4px]">{label}</span>
            </div>
          ))}
        </div>
        <div className="flex h-[17px] shrink-0 bg-[#f8f8f8]">
          <Btn cls="w-[16px]"><Tri d="l" /></Btn><Btn cls="w-[22px]" /><div className="grow" /><Btn cls="w-[16px]"><Tri d="r" /></Btn>
        </div>
      </div>
      <div className="w-[547px] shrink-0 border-t border-b border-l border-[#5e5e60]">
        <Plot />
      </div>
    </div>
    <div className="mt-[2px] flex h-[19px] shrink-0 items-center pl-[37px] text-[12px] tracking-[-0.2px]">
      <span>Ready</span>
      <span className="ml-auto">X:</span>
      <div className="ml-[6px] h-[16px] w-[80px] border-t border-l border-[#a0a0a0]" />
      <span className="ml-[6px]">Y:</span>
      <div className="ml-[6px] h-[16px] w-[75px] border-t border-l border-[#a0a0a0]" />
    </div>
  </div>
);

/* ---------- bottom dock ---------- */

const DockTab = ({ t, w }: { t: string; w: string }) => (
  <div className={`${w} flex shrink-0 flex-col items-center overflow-hidden border-t border-b border-l border-[#808084] bg-gradient-to-r from-[#e8e8ea] to-[#b4b4b8] pt-[5px]`}>
    <svg width="9" height="37" viewBox="0 0 9 37" stroke="#000" fill="none" className="block shrink-0">
      <path d="M2 1l5 5M7 1L2 6" strokeWidth="1.700" /><path d="M6 14v6l-3-3z" fill="#000" stroke="none" /><path d="M1 32.500h2M3.500 30v6M3.500 31.500h4v3h-4" />
    </svg>
    <div className="mt-[2px] flex h-[33px] w-4 shrink-0 items-center overflow-hidden">
      <span className="h-full rotate-180 font-['DejaVu_Sans',sans-serif] text-[9.5px] leading-[16px] text-black [writing-mode:vertical-rl]">{t}</span>
    </div>
    <div className="mt-[3px]"><GripH n={2} /></div>
  </div>
);

const COLS: [string, string, string][] = [
  ["w-[41px]", "SimID", "1"],
  ["w-[162px]", "Driver", "PMOD2BNCSIMPLE_V1_02.J1.5"],
  ["w-[188px]", "Receiver", "PMOD2BNCSIMPLE_V1_02.BNC8.5"],
  ["w-[41px]", "Cycle", "1"],
  ["w-[57px]", "GlitchTol\n[ns]", "0.05"],
  ["w-[61px]", "FTSMode", "Typ"],
  ["w-[41px]", "Glitch", "PASS"],
  ["w-[69px]", "Monotonic", "PASS"],
  ["w-[51px]", "NoiseMa\n[mV]", "403.727"],
];

const Dock = () => (
  <div className="flex h-[90px] w-[1473px] shrink-0 font-['Liberation_Sans',Arial,sans-serif] text-[11px] text-black">
    <DockTab t="Results" w="w-[18px]" />
    <div className="flex w-[714px] shrink-0 flex-col border-t-2 border-r border-b-2 border-l-2 border-t-[#6a6a6c] border-r-white border-b-[#88888a] border-l-[#6a6a6c]">
      <div className="flex h-[30px] shrink-0 border-b-2 border-black">
        {COLS.map(([w, h], i) => (
          <div key={h} className={`${w} ${i === 8 ? "justify-end" : "justify-center border-r-2 pl-[2px]"} flex shrink-0 items-center overflow-hidden whitespace-pre border-black text-center font-bold leading-[14px]`}>
            {i === 8 ? <span className="text-right">{h}</span> : h}
          </div>
        ))}
      </div>
      <div className="flex h-[17px] shrink-0 border-b border-[#707070]">
        {COLS.map(([w, h, v], i) => (
          <div key={h} className={`${w} ${i === 0 ? "border-b border-r-2 border-black" : i === 8 ? "" : "border-r border-[#707070]"} ${v.length > 20 ? "tracking-[-0.53px]" : "tracking-[-0.2px]"} flex shrink-0 items-center overflow-hidden whitespace-nowrap pl-[5px]`}>{v}</div>
        ))}
      </div>
      <div className="mt-auto flex h-[17px] shrink-0 bg-[#f7f6f7]">
        <Btn cls="w-[16px]"><Tri d="l" /></Btn><Btn cls="w-[469px]" /><div className="grow" /><Btn cls="w-[17px]"><Tri d="r" /></Btn>
      </div>
    </div>
    <div className="w-[7px] shrink-0" />
    <DockTab t="Command" w="w-[17px]" />
    <div className="flex w-[715px] shrink-0 flex-col">
      <div className="flex h-[60px] shrink-0 bg-white">
        <div className="grow pl-[2px] pt-px leading-[13px]">
          <div className="tracking-[-0.22px]">Simulation (PMOD2BNCSIMPLE_V1_02 J1 5) PMOD2BNCSIMPLE_V1_02 J1 5 Pulse Typ Reflection</div>
          <div className="tracking-[-0.21px]">Using waveform resolution 0.200000 ns.</div>
          <div className="tracking-[-0.22px]">Simulation (PMOD2BNCSIMPLE_V1_02 J1 5) PMOD2BNCSIMPLE_V1_02 J1 5 Pulse Typ Reflection finished</div>
        </div>
        <div className="flex w-[17px] shrink-0 flex-col bg-[#f7f6f7]">
          <Btn cls="h-[17px]"><Tri d="u" /></Btn><div className="grow" /><Btn cls="h-[8px]" /><Btn cls="h-[18px]"><Tri d="d" /></Btn>
        </div>
      </div>
      <div className="ml-[2px] mt-px h-[28px] border-t-2 border-r border-b border-l-2 border-t-[#707072] border-r-[#e0e0e0] border-b-[#e0e0e0] border-l-[#707072] bg-white pl-px leading-[15px] tracking-[-0.4px]">Command &gt;</div>
    </div>
  </div>
);

/* ---------- taskbar ---------- */

const Chrome = () => (
  <g>
    <circle cx="12" cy="12" r="12" fill="#fbc116" />
    <path d="M1.600 6A12 12 0 0 1 22.400 6H12a6 6 0 0 0-5.200 9z" fill="#e33b2e" />
    <path d="M1.600 6A12 12 0 0 0 12 24l5.200-9a6 6 0 0 1-10.400 0z" fill="#2da94f" />
    <circle cx="12" cy="12" r="5.700" fill="#fff" /><circle cx="12" cy="12" r="4.500" fill="#3c7ee8" />
  </g>
);

const TASKS: [string, React.ReactNode][] = [
  ["", <g key="tv" stroke="#e8e8e8" strokeWidth="1.300"><path d="M4 8.500h9v7H4zM4 4v2h9V4M4 20v-2h9v2M17.500 4v16" /><path d="M16 9h3v3h-3z" fill="#e8e8e8" /></g>],
  ["", <g key="ed"><circle cx="12" cy="12" r="12" fill="#1677c8" /><path d="M0 10C2-3 22-3 24 10c0 6-8 7-9.500 4.500C17 9 12 5 7 6.500 3 7.500 1 9 0 10z" fill="#38c2c0" /><path d="M16 1c6 2 9 8 7 12-2 3-7 3.500-8.500 1.500 2-3 1-6-2-8z" fill="#5ad070" opacity=".8" /><path d="M9.500 9.500C5 13 7 22 14 23.500c3 0 6-1.500 8-4.500-6 3-12-1-12.500-5.500 0-2 0-3 1-4z" fill="#0d4f96" /></g>],
  ["w", <g key="ex"><path d="M1 3h8l2 2h12v17H1z" fill="#e8a628" /><path d="M1 7h22v15H1z" fill="#fbd55f" /><path d="M5 13h14v9h-4v-5H9v5H5z" fill="#3f8fd8" /></g>],
  ["", <g key="st"><path d="M7 6V2h10v4" stroke="#35a0e0" strokeWidth="2" /><path d="M1 5h22v16l-2 2H3l-2-2z" fill="#f6f6f6" /><path d="M7 9h4.500v4.500H7z" fill="#f25022" /><path d="M12.500 9H17v4.500h-4.500z" fill="#7fba00" /><path d="M7 14.500h4.500V19H7z" fill="#00a4ef" /><path d="M12.500 14.500H17V19h-4.500z" fill="#ffb900" /></g>],
  ["", <g key="ml"><path d="M0 9l12-8 12 8v13H0z" fill="#1258a8" /><path d="M3 8h18v8H3z" fill="#fff" /><path d="M0 9l12 8L24 9v13H0z" fill="#35a4ea" /><path d="M0 22l12-9 12 9z" fill="#2088d4" /></g>],
  ["", <Chrome key="c1" />],
  ["u", <g key="gt" transform="rotate(45 12 12)"><path d="M3 3h8.500v8.500H3z" fill="#f07c78" /><path d="M12.500 3H21v8.500h-8.500z" fill="#9fe08c" /><path d="M3 12.500h8.500V21H3z" fill="#7cb0f0" /><path d="M12.500 12.500H21V21h-8.500z" fill="#f6d878" /><path d="M7 7l10 10M12 3v18" stroke="#222" strokeWidth="1.600" /></g>],
  ["u", <g key="c2"><Chrome /><circle cx="17.500" cy="18" r="7.500" fill="#c03a14" /><circle cx="17.500" cy="18" r="1" fill="#f0c0a0" /></g>],
  ["", <g key="ar"><path d="M0 0h24v24H0z" fill="#585858" /><path d="M1 10C2 4 7 1 12 1s10 3 11 9z" fill="#7a8c3c" /><path d="M1 14c1 6 6 9 11 9s10-3 11-9z" fill="#a01818" /><path d="M0 14h10v8C5 22 2 19 0 14z" fill="#1890a8" /><path d="M0 8.500h12V3l11 9-11 9v-5.500H0z" fill="#fff" /></g>],
  ["u", <g key="c3"><Chrome /><circle cx="17.500" cy="17.500" r="8" fill="#7a55b8" /><text x="17.500" y="21" textAnchor="middle" fontSize="8.500" fill="#fff" fontFamily="Noto Sans CJK KR, sans-serif">정현</text></g>],
  ["u", <g key="gr"><path d="M3 3l8 7M3 12h7M3 21l9-9M21 3l-9 9M14 15h7M13 20h8" stroke="#18c028" strokeWidth="2" /><g fill="#18e028"><circle cx="3" cy="3" r="2.600" /><circle cx="3" cy="12" r="2.600" /><circle cx="3" cy="21" r="2.600" /><circle cx="21" cy="3" r="2.600" /><circle cx="21" cy="15" r="2.600" /><circle cx="20" cy="21" r="2.600" /></g><path d="M6 20L17 5l0 14M9 14h8" stroke="#e01818" strokeWidth="2.500" /></g>],
  ["u", <g key="sx"><path d="M0 0h24v21l-2 2H2l-2-2z" fill="#0a8020" /><path d="M3 22.500h18" stroke="#f0e020" strokeWidth="2.500" strokeDasharray="2 1" /><text x="1.500" y="8" fontSize="8" fill="#fff" fontFamily="Liberation Sans, sans-serif">Sig</text><text x="1.500" y="16" fontSize="7" fill="#fff" fontFamily="Liberation Sans, sans-serif" textLength="21" lengthAdjust="spacingAndGlyphs">Xplorer</text></g>],
  ["a", <g key="sw"><path d="M3 18c3-2 1-11 4-11 2 0 2 4 4 4s2-4 4-4c3 0 2 9 6 11" stroke="#101010" strokeWidth="1.500" /><path d="M2.500 8v11M21.500 12v8M0 18h5M19 18h5" stroke="#2030e0" strokeWidth="1.600" /></g>],
];

const Taskbar = () => (
  <div className="flex h-[40px] shrink-0 bg-[#1e1e1f] font-['Noto_Sans_CJK_KR','Noto_Sans',sans-serif] text-white">
    <div className="flex w-[48px] shrink-0 items-center justify-center">
      <svg width="16" height="16" viewBox="0 0 16 16" fill="#fff"><path d="M0 2.300L7 1.300v6.300H0zM8 1.100L16 0v7.600H8zM0 8.500h7v6.300l-7-1zM8 8.500h8V16l-8-1.100z" /></svg>
    </div>
    <div className="flex w-[288px] shrink-0 items-center border border-[#c8c8c8] bg-[#f2f2f2] pl-[10px]">
      <svg width="18" height="18" viewBox="0 0 18 18" fill="none" stroke="#222" strokeWidth="1.300"><circle cx="11" cy="6.500" r="5" /><path d="M7.500 10.500L1.500 17" /></svg>
      <span className="ml-[11px] text-[14.500px] tracking-[-0.5px] text-[#333]">찾기</span>
      <svg width="76" height="38" viewBox="0 0 76 38" fill="none" className="ml-auto block">
        <g stroke="#c4c4c4"><path d="M22 0C-2 8-2 30 22 38M34 0C10 8 10 30 34 38M50 0C26 8 26 30 50 38M68 4C44 10 44 28 68 34" /></g>
        <circle cx="7" cy="18.500" r="4" fill="#c05838" /><circle cx="20" cy="18.500" r="6" fill="#3f86b8" /><path d="M17 14l5 2-2 6-4-3z" fill="#58a840" />
        <circle cx="37" cy="18.500" r="6" fill="#c88030" /><path d="M32 16h9M32 21h9" stroke="#885018" /><circle cx="53" cy="18.500" r="5.500" fill="#b8b8b0" />
        <path d="M76 3l-5 1 0 4-5 1 1 4-4 3 2 3-2 3 4 3-1 4 5 1 0 4 5 1z" fill="#f88818" /><path d="M76 8c-11 3-11 19 0 22z" fill="#f8a828" />
      </svg>
    </div>
    <div className="flex">
      {TASKS.map(([k, icon], i) => (
        <div key={i} className={`${k === "a" ? "bg-[#48484a]" : ""} ${i === 0 ? "w-[50px]" : "w-[49px]"} flex shrink-0 flex-col items-center`}>
          <div className="flex h-[38px] items-center"><Ico s={24} vb={24}>{icon}</Ico></div>
          {k !== "" && <div className={`${k === "a" ? "w-[49px]" : "w-[40px]"} h-[2px] bg-[#78b4e8]`} />}
        </div>
      ))}
    </div>
    <div className="ml-auto flex items-center pr-[4px] text-[14px]">
      <svg width="26" height="26" viewBox="0 0 26 26" fill="none">
        <path d="M2 18c-3-6 3-8 5-7 1-5 8-7 11-2 5-1 8 7 5 9z" fill="#b8d0f4" /><path d="M8 17v5M16 16v8M22 17v3" stroke="#2878e8" strokeWidth="4" strokeLinecap="round" />
        <circle cx="18.500" cy="6.500" r="6" fill="#c42b1c" /><text x="18.500" y="10" fontSize="9.500" textAnchor="middle" fill="#fff" fontFamily="Noto Sans, sans-serif">1</text>
      </svg>
      <span className="ml-[7px] w-[38px] tracking-[-0.5px]">20°C</span><span className="w-[39px]">비</span>
      <svg width="12" height="8" viewBox="0 0 12 8" fill="none" stroke="#fff" strokeWidth="1.200"><path d="M0.500 7L6 1.500 11.500 7" /></svg>
      <svg width="18" height="16" viewBox="0 0 18 16" fill="none" stroke="#fff" strokeWidth="1.200" className="ml-[9px]"><path d="M1 5.500h2.500L7 2v12l-3.500-3.500H1zM9.500 5.500c1 1.500 1 3.500 0 5M12 3.500c2.200 3 2.200 6 0 9M14.500 1.500c3 4 3 9 0 13" /></svg>
      <svg width="18" height="14" viewBox="0 0 18 14" fill="none" stroke="#fff" strokeWidth="1.200" className="ml-[7px]"><path d="M6 2h11v8H4V6M1 1h4v4H1zM3 5v8M8 13h7M11.500 10v3" /></svg>
      <span className="ml-[7px] w-[14px] text-[18px]">A</span>
      <div className="ml-[4px] flex w-[80px] flex-col items-center text-[12.500px] leading-[19px] tracking-[-0.2px]"><span>오후 10:05</span><span>2023-11-05</span></div>
      <svg width="26" height="26" viewBox="0 0 26 26" fill="none" className="ml-[12px]">
        <path d="M1 2h16v12H9l-4 4v-4H1z" fill="#fff" /><path d="M4 5.500h10M4 8h10M4 10.500h10" stroke="#222" />
        <circle cx="16" cy="17.500" r="7.500" fill="#3a3a3c" stroke="#8a8a8a" /><text x="16" y="21.500" fontSize="11" textAnchor="middle" fill="#fff" fontFamily="Noto Sans, sans-serif">8</text>
      </svg>
      <div className="ml-[10px] h-[40px] w-px bg-[#707070]" />
    </div>
  </div>
);

/* ---------- application ---------- */

const Panel = ({ children, cls }: Kids & { cls: string }) => (
  <div className={`${cls} flex shrink-0 flex-col rounded-br border-r border-b border-[#a4a4a8] bg-gradient-to-r from-[#e2e2e4] via-[#d6d6d9] to-[#bcbcc0] pt-[2px]`}>{children}</div>
);

export default function App() {
  return (
    <div className="relative flex h-[1080px] w-[1920px] flex-col overflow-hidden bg-[#f0eff1] font-['Noto_Sans','Noto_Sans_CJK_KR',sans-serif]">
      <div className="flex h-[23px] shrink-0 items-center bg-white">
        <svg width="18" height="18" viewBox="0 0 18 18" className="ml-px block shrink-0">
          <path d="M1 1h16v14l-2 2H3l-2-2z" fill="#087818" /><path d="M3 16.500h12" stroke="#e8e020" strokeWidth="1.500" strokeDasharray="2 1" />
          <path d="M4 4l2 1M8 4v3M10 5h2M3 10l3 3M6 10l-3 3M8 9v4M10 11h2M14 10v3" stroke="#fff" />
        </svg>
        <span className="ml-[5px] whitespace-pre text-[12px] tracking-[-0.06px] text-[#999]">{"SigXplorer OrCAD PCB Designer w/ PSpice: N08600 1.0  Project: C:.../PMOD2BNC_SIMPLE_V1_0"}</span>
        <svg width="104" height="12" viewBox="0 0 104 12" fill="none" stroke="#888" className="ml-auto mr-[18px] block"><path d="M1 6.500h10M46.500 3.500h7v7h-7zM48.500 3V1.500h7v7H54M92 1l10 10M102 1L92 11" /></svg>
      </div>
      <div className="flex h-[20px] shrink-0 items-center pl-[7px] text-[12.500px] tracking-[-0.35px] text-[#404040]">
        <MenuItem t="File" w="w-[32px]" /><MenuItem t="Edit" w="w-[34px]" /><MenuItem t="View" w="w-[40px]" /><MenuItem t="Set" w="w-[31px]" /><MenuItem t="Analyze" w="w-[56px]" /><MenuItem t="Help" w="w-[40px]" />
        <div className="ml-auto mr-[5px]"><Cadence /></div>
      </div>
      <div className="h-[3px] shrink-0 bg-[#b40c10]" />
      <div className="flex h-[35px] shrink-0 bg-gradient-to-b from-[#eeeeef] to-[#d6d6d8]">
        <div className="flex w-[830px] items-center border-b border-[#909094] bg-gradient-to-b from-[#dfdfe1] to-[#bdbdc0] pb-[3px]">
          <div className="ml-[3px] mr-[-1px]"><GripV /></div>
          {FILE_ICONS.map((n, i) => <Cell31 key={i}><Ico s={19}>{n}</Ico></Cell31>)}
          <div className="ml-[8px] mr-[3px] h-8 border-l border-dotted border-[#aaa]" /><GripV />
          {EDIT_ICONS.map((n, i) => <Cell31 key={i}><Ico s={19}>{n}</Ico></Cell31>)}
          <div className="ml-[7px] mr-[3px] h-8 border-l border-dotted border-[#aaa]" /><GripV />
          {ZOOM_ICONS.map((n, i) => <Cell31 key={i}><Ico s={21}>{n}</Ico></Cell31>)}
          <div className="ml-[7px] mr-[3px] h-8 border-l border-dotted border-[#aaa]" /><GripV />
          {TOOL_ICONS.map((n, i) => <Cell31 key={i}><Ico s={20}>{n}</Ico></Cell31>)}
        </div>
      </div>
      <div className="flex h-[941px] shrink-0">
        <div className="flex w-[34px] shrink-0 flex-col">
          <Panel cls="h-[230px] w-[34px]">
            <GripH n={5} />
            <div className="flex flex-col items-center pr-[2px]">{PALETTE_1.map((n, i) => <div key={i} className="flex h-[31px] items-center"><Ico s={22}>{n}</Ico></div>)}</div>
          </Panel>
          <Panel cls="h-[199px] w-[34px]">
            <GripH n={5} />
            <div className="flex flex-col items-center pr-[2px]">
              {PALETTE_2.map((n, i) => <div key={i} className="flex h-[31px] items-center"><Ico s={22}>{n}</Ico></div>)}
              {[0, 1, 2].map((i) => <div key={i} className="flex h-[31px] items-center"><Ico s={22}><GreyPart /></Ico></div>)}
            </div>
          </Panel>
        </div>
        <div className="flex w-[50px] shrink-0 flex-col gap-px">
          <Panel cls="h-[75px] w-[49px]">
            <div className="mb-px"><GripH n={8} /></div>
            <Hi><Ico s={22}><Buf /></Ico></Hi>
            <Hi><Ico s={22}><Buf two /></Ico></Hi>
          </Panel>
          <Panel cls="h-[198px] w-[49px]">
            <GripH n={8} />
            <div className="flex h-[31px] items-center justify-center pr-px"><Ico s={21}><Coupled /></Ico></div>
            <Hi><Ico s={22}><Coupled bot /></Ico></Hi>
            <Hi><Ico s={22}><Coupled top bot /></Ico></Hi>
            {[0, 1, 2].map((i) => <div key={i} className="flex h-[31px] items-center justify-center"><Ico s={21}><GreyCoupled /></Ico></div>)}
          </Panel>
          <Panel cls="h-[75px] w-[49px]">
            <GripH n={8} />
            <div className="flex h-[32px] items-center justify-center"><Ico s={26} vb={26}><path d="M6 4v9M19 16v8" stroke="#8898c8" strokeWidth="4" /><path d="M6 4v9M19 16v8" stroke="#d4dcf2" strokeWidth="2" /><path d="M4 3h4M10.500 14h4M17 25h4" stroke="#d89020" strokeWidth="3" /><path d="M6 14h4M14 14h5" stroke="#705040" strokeDasharray="2 1" /></Ico></div>
            <Hi><Ico s={24} vb={24}><path d="M11 3v18" stroke="#8898c8" strokeWidth="5" /><path d="M11 3v18" stroke="#ccd6f2" strokeWidth="2.500" /><path d="M7 2h8M7 12h8M7 22h8" stroke="#d89020" strokeWidth="3" /></Ico></Hi>
          </Panel>
        </div>
        <div className="flex w-[1479px] shrink-0 flex-col">
          <div className="h-[811px] w-[1472px] shrink-0 border-t-2 border-b border-l-2 border-t-[#808082] border-b-white border-l-[#808082]"><Schematic /></div>
          <div className="h-[6px] shrink-0" />
          <div className="pl-px"><Dock /></div>
          <div className="ml-[25px] mt-[10px] flex h-[20px] w-[109px] shrink-0 items-center justify-center border-t border-r border-l border-[#8fa0b4] bg-[#f0f0f1] pt-px text-[12px] tracking-[-0.3px] text-[#303030]">Measurements</div>
        </div>
        <div className="h-[938px] w-[355px] shrink-0 border-r border-b border-l border-r-white border-b-white border-l-[#707072] bg-[#efeff0]" />
      </div>
      <div className="flex h-[18px] shrink-0 items-center border-t-2 border-[#6e6e74] font-['Liberation_Sans',Arial,sans-serif] text-[11px] text-black">
        <div className="h-full grow pl-[2px] leading-[15px]">Idle</div>
        <div className="h-full w-[52px] border-l-2 border-[#808080] bg-[#00ff00]" />
        <div className="ml-[1px] h-full w-[132px] border-l-2 border-[#808080]" />
        <div className="h-full w-[134px] border-l-2 border-[#808080] pr-[2px] text-center leading-[15px]">5540.00, 4225.00</div>
      </div>
      <Taskbar />
      <SigWave />
    </div>
  );
}
